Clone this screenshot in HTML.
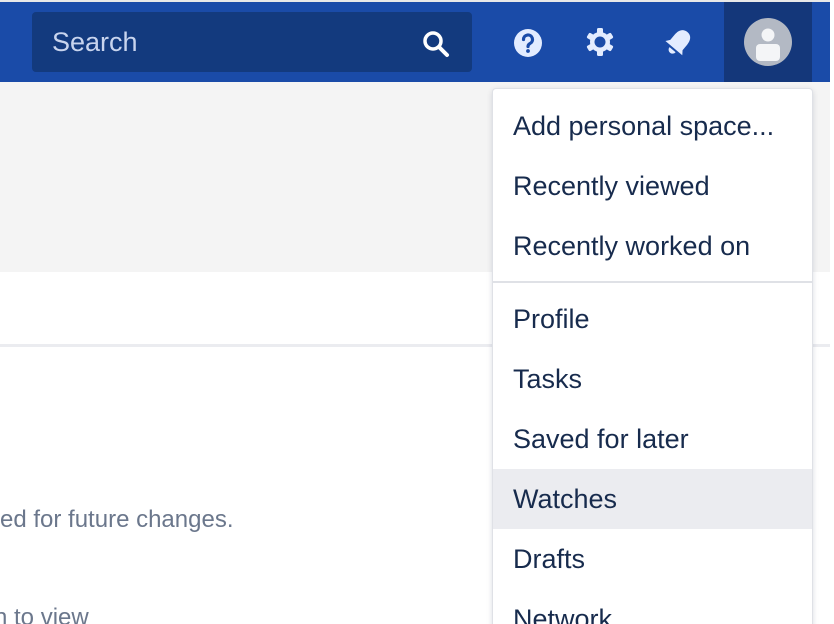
<!DOCTYPE html>
<html><head><style>
*{margin:0;padding:0;box-sizing:border-box}
html,body{width:834px;height:624px;overflow:hidden}
body{background:#fff;font-family:"Liberation Sans",sans-serif;position:relative}
.hdr{position:absolute;left:0;top:2px;width:830px;height:80px;background:#1a4ba8}
.top{position:absolute;left:0;top:0;width:834px;height:2px;background:#e8e8e8}
.rs{position:absolute;left:830px;top:0;width:4px;height:624px;background:#fff}
.search{position:absolute;left:32px;top:12px;width:440px;height:60px;background:#133a7e;border-radius:4px;color:#c8d4ee;font-size:27px;padding:15px 20px}
.av{position:absolute;left:724px;top:2px;width:88px;height:80px;background:#14377a}
.gray{position:absolute;left:0;top:82px;width:830px;height:190px;background:#f4f4f4}
.line{position:absolute;left:0;top:344px;width:830px;height:3px;background:#ebecf0}
.txt{position:absolute;left:0;color:#6b778c;font-size:24px}
.dd{position:absolute;left:492px;top:88px;width:321px;height:560px;background:#fff;border:1px solid #dfe1e6;border-radius:4px;box-shadow:0 2px 6px rgba(9,30,66,.15)}
.it{position:absolute;left:0;width:319px;height:60px;padding-left:20px;line-height:60px;font-size:27px;color:#172b4d}
.sep{position:absolute;left:0;top:192px;width:319px;height:2px;background:#dfe1e6}
</style></head><body>
<div class="top"></div>
<div class="hdr"></div>
<div class="search">Search
<svg style="position:absolute;right:22px;top:18px" width="28" height="28" viewBox="0 0 28 28"><circle cx="11" cy="11" r="8" fill="none" stroke="#fff" stroke-width="3.5"/><path d="M17 17l8 8" stroke="#fff" stroke-width="4" stroke-linecap="round"/></svg></div>
<svg style="position:absolute;left:513px;top:28px" width="30" height="30" viewBox="0 0 30 30"><circle cx="15" cy="15" r="14" fill="#e3ecff"/><path d="M10.5 11.5a4.5 4.5 0 1 1 6.5 4c-1.5.8-2 1.5-2 3" fill="none" stroke="#1a4ba8" stroke-width="3.2" stroke-linecap="round"/><circle cx="15" cy="23" r="1.9" fill="#1a4ba8"/></svg>
<svg style="position:absolute;left:585px;top:27px" width="30" height="30" viewBox="0 0 30 30"><g fill="#e3ecff"><circle cx="15" cy="15" r="10"/><rect x="12" y="1" width="6" height="28" rx="1.5"/><rect x="12" y="1" width="6" height="28" rx="1.5" transform="rotate(60 15 15)"/><rect x="12" y="1" width="6" height="28" rx="1.5" transform="rotate(120 15 15)"/></g><circle cx="15" cy="15" r="5.5" fill="#1a4ba8"/></svg>
<svg style="position:absolute;left:662px;top:26px" width="34" height="32" viewBox="0 0 34 32"><g transform="rotate(40 17 16)"><path d="M17 3 C11 3 9 8 9 13 L9 20 L6 24 L28 24 L25 20 L25 13 C25 8 23 3 17 3 Z" fill="#e3ecff"/><path d="M13 26 a4 4 0 0 0 8 0" fill="#e3ecff"/></g></svg>
<div class="av"><svg style="position:absolute;left:20px;top:16px" width="48" height="48" viewBox="0 0 48 48"><circle cx="24" cy="24" r="24" fill="#b3b9c4"/><circle cx="24" cy="17" r="6.5" fill="#f4f5f7"/><rect x="12" y="26" width="24" height="17" rx="4" fill="#f4f5f7"/></svg></div>
<div class="rs"></div>
<div class="gray"></div>
<div class="line"></div>
<div class="txt" style="top:506px">ed for future changes.</div>
<div class="txt" style="top:604px;left:-6px">n to view</div>
<div class="dd">
<div class="it" style="top:7px">Add personal space...</div>
<div class="it" style="top:67px">Recently viewed</div>
<div class="it" style="top:127px">Recently worked on</div>
<div class="sep"></div>
<div class="it" style="top:200px">Profile</div>
<div class="it" style="top:260px">Tasks</div>
<div class="it" style="top:320px">Saved for later</div>
<div class="it" style="top:380px;background:#ebecf0">Watches</div>
<div class="it" style="top:440px">Drafts</div>
<div class="it" style="top:500px">Network</div>
</div>
</body></html>
